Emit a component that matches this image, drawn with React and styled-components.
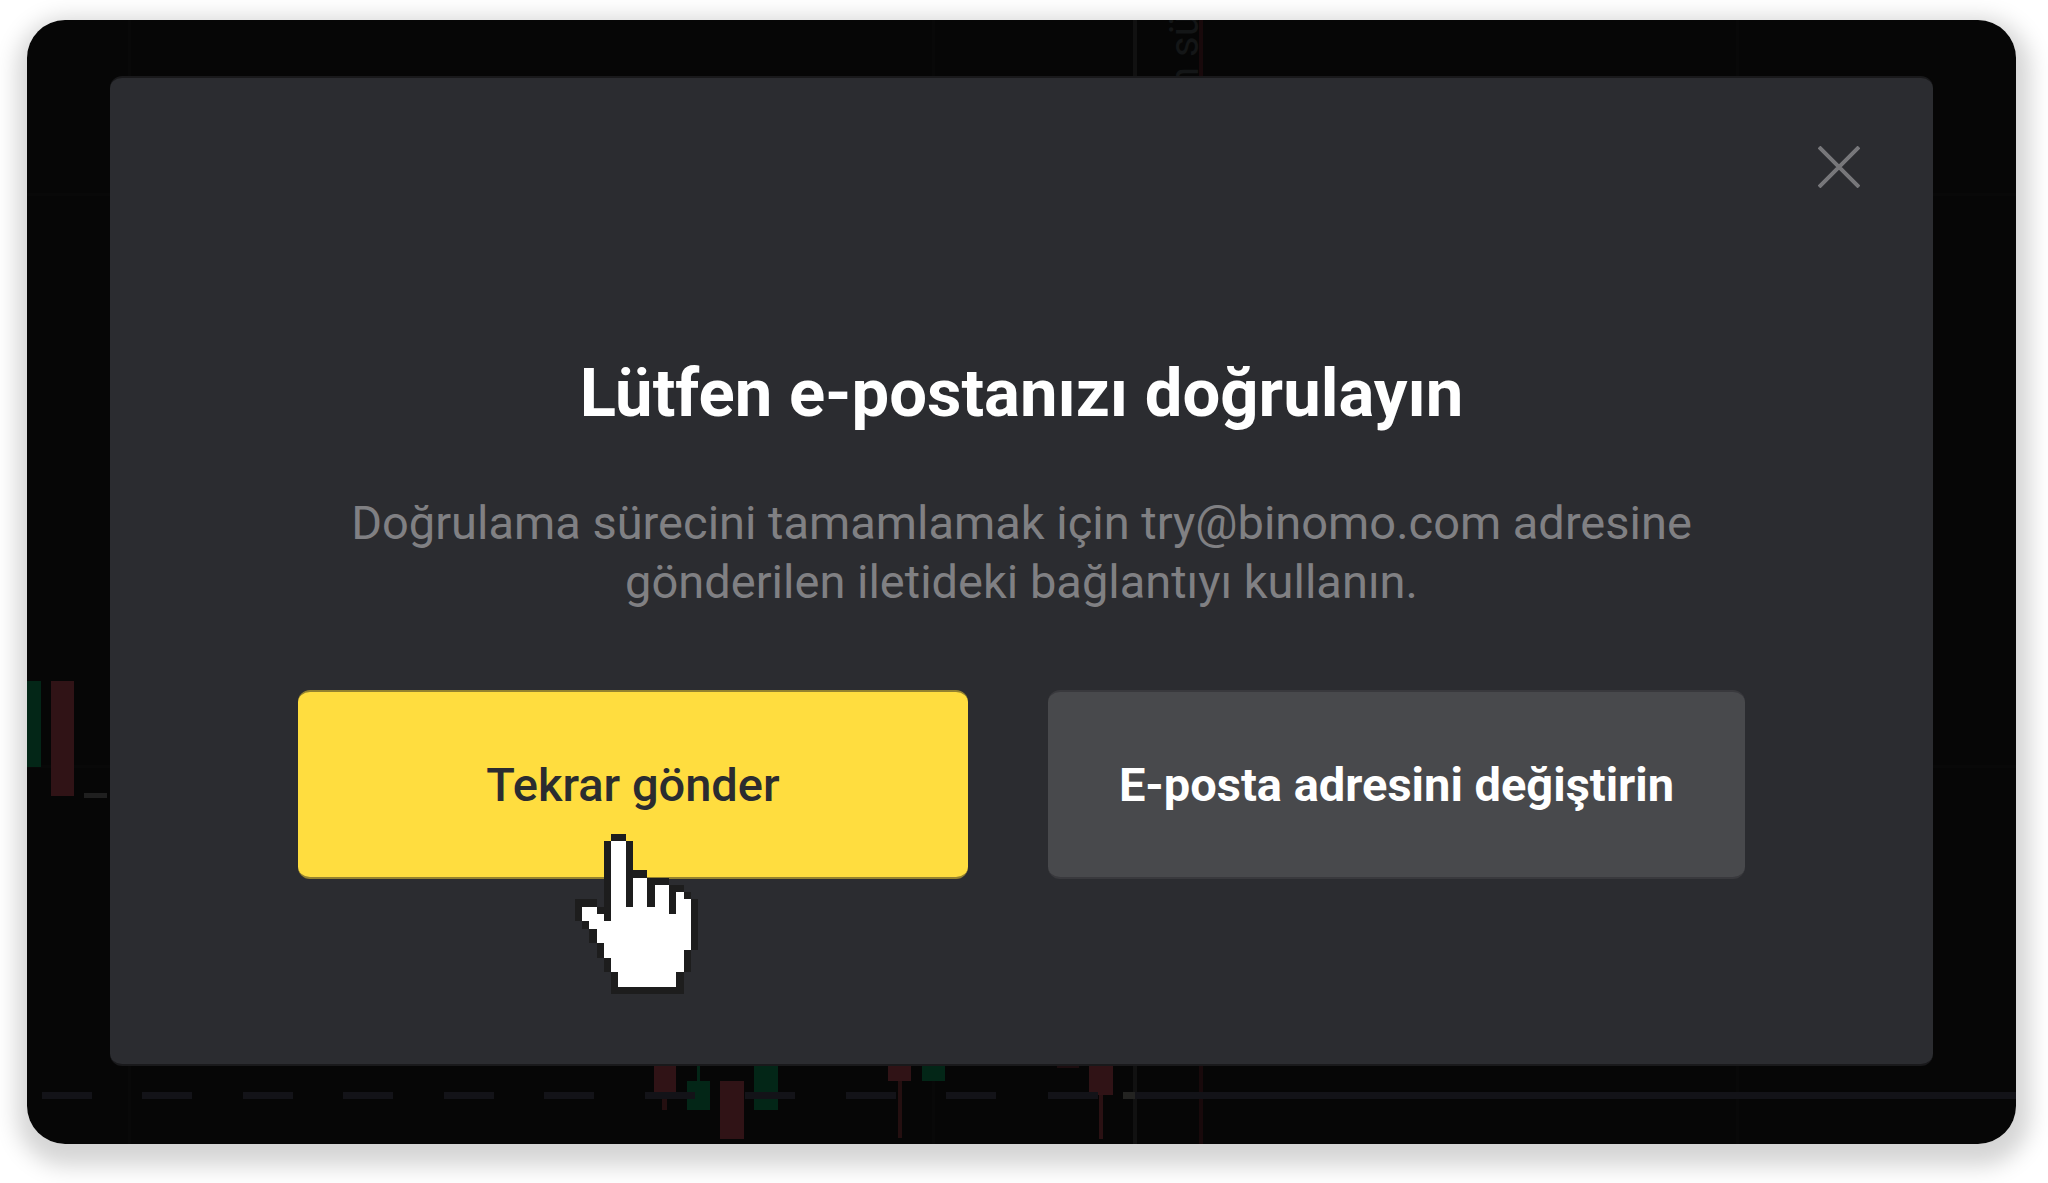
import React from 'react';
import styled, { createGlobalStyle } from 'styled-components';

const GlobalStyle = createGlobalStyle`
  *, *::before, *::after {
    box-sizing: border-box;
  }

  body {
    margin: 0;
    background: #fff;
    font-family: Roboto, 'Liberation Sans', sans-serif;
  }
`;

const Page = styled.div`
  padding: 20px 32px 39px 27px;
`;

const Screen = styled.main`
  position: relative;
  overflow: hidden;
  padding: 56px 83px 78px;
  border-radius: 38px;
  background: #060606;
`;

const ScreenShadow = styled.div`
  border-radius: 38px;
  box-shadow: 2px 10px 22px 12px rgba(0, 0, 0, 0.17);
`;

const ChartSvg = styled.svg`
  position: absolute;
  inset: 0;
  width: 100%;
  height: 100%;
`;

const Modal = styled.section`
  position: relative;
  border-top: 2px solid #19191b;
  border-bottom: 2px solid #19191b;
  border-radius: 12px;
  background: #2b2c30;
`;

const ModalHeader = styled.header`
  display: flex;
  justify-content: flex-end;
  padding: 65px 70px 0;
`;

const CloseButton = styled.button`
  display: grid;
  place-items: center;
  width: 48px;
  height: 48px;
  padding: 0;
  border: 0;
  background: none;
  color: #77777a;
  cursor: pointer;
`;

const ModalBody = styled.div`
  padding: 162px 188px 185px;
  text-align: center;
`;

const Title = styled.h1`
  margin: 0 0 60px;
  font-size: 67px;
  font-weight: 700;
  line-height: 80px;
  color: #fff;
`;

const Message = styled.p`
  margin: 0 0 79px;
  font-size: 47px;
  line-height: 59px;
  color: #808083;
`;

const Actions = styled.div`
  display: grid;
  grid-template-columns: 670fr 697fr;
  gap: 80px;
`;

const Action = styled.div`
  position: relative;
`;

const Button = styled.button`
  width: 100%;
  height: 189px;
  padding: 0 16px;
  border: 0 solid ${({ $primary }) => ($primary ? '#94822f' : '#39393d')};
  border-width: 2px 0;
  border-radius: 12px;
  background: ${({ $primary }) => ($primary ? '#ffdd3f' : '#48494c')};
  color: ${({ $primary }) => ($primary ? '#2b2c30' : '#fff')};
  font-family: inherit;
  font-size: 47px;
  font-weight: ${({ $primary }) => ($primary ? 500 : 700)};
  cursor: pointer;
`;

const HandSvg = styled.svg`
  position: absolute;
  top: 144px;
  left: calc(50% - 58px);
  width: 123px;
  height: 160px;
  pointer-events: none;
`;

// # is the outline, o is the fill
const handRows = [
  '     ##          ',
  '    #oo#         ',
  '    #oo#         ',
  '    #oo#         ',
  '    #oo#         ',
  '    #oo###       ',
  '    #oo#oo###    ',
  '    #oo#oo#oo##  ',
  '    #oo#oo#oo#o# ',
  '### #oo#oo#oo#oo#',
  '#oo##oooooooo#oo#',
  '#ooo#ooooooooooo#',
  ' #oooooooooooooo#',
  '  #ooooooooooooo#',
  '  #ooooooooooooo#',
  '   #oooooooooooo#',
  '   #ooooooooooo# ',
  '    #oooooooooo# ',
  '    #oooooooooo# ',
  '     #oooooooo#  ',
  '     #oooooooo#  ',
  '     ##########  ',
];

const HandCursor = () => (
  <HandSvg viewBox="0 0 17 22" preserveAspectRatio="none" shapeRendering="crispEdges" aria-hidden="true">
    {handRows.map((row, y) =>
      [...row].map((cell, x) =>
        cell === ' ' ? null : (
          <rect key={`${x}-${y}`} x={x} y={y} width="1" height="1" fill={cell === '#' ? '#1d1d1d' : '#fff'} />
        )
      )
    )}
  </HandSvg>
);

const RED = '#301316';
const GREEN = '#032617';

const candles = [
  { x: 0, y: 661, w: 14, h: 86, fill: GREEN },
  { x: 24, y: 661, w: 23, h: 115, fill: RED },
  { x: 627, y: 1040, w: 22, h: 32, fill: RED },
  { x: 635, y: 1072, w: 5, h: 18, fill: '#240f10' },
  { x: 670, y: 1040, w: 3, h: 21, fill: GREEN },
  { x: 660, y: 1061, w: 23, h: 29, fill: GREEN },
  { x: 693, y: 1061, w: 24, h: 58, fill: RED },
  { x: 727, y: 1040, w: 24, h: 50, fill: GREEN },
  { x: 861, y: 1040, w: 23, h: 21, fill: RED },
  { x: 871, y: 1061, w: 4, h: 57, fill: '#240f10' },
  { x: 895, y: 1040, w: 23, h: 21, fill: GREEN },
  { x: 1030, y: 1040, w: 22, h: 8, fill: '#1c0d0f' },
  { x: 1062, y: 1040, w: 24, h: 35, fill: RED },
  { x: 1072, y: 1075, w: 4, h: 44, fill: '#2a1113' },
];

const dashes = [15, 115, 216, 316, 417, 517, 618, 718, 819, 919, 1021];

const Chart = () => (
  <ChartSvg viewBox="0 0 1989 1124" preserveAspectRatio="none" aria-hidden="true">
    <g fill="#080808">
      <rect x="101" y="0" width="3" height="1124" />
      <rect x="905" y="0" width="3" height="1124" />
      <rect x="1709" y="0" width="3" height="1124" />
      <rect x="0" y="173" width="1989" height="3" />
      <rect x="0" y="745" width="1989" height="3" />
    </g>
    <rect x="1106" y="0" width="4" height="1124" fill="#111" />
    <rect x="1172" y="0" width="4" height="1124" fill="#18090b" />
    <text transform="translate(1171 69) rotate(-90)" fontSize="40" fill="#141617">
      n sü
    </text>
    {candles.map(({ x, y, w, h, fill }) => (
      <rect key={`${x}-${y}`} x={x} y={y} width={w} height={h} fill={fill} />
    ))}
    <rect x="57" y="773" width="23" height="5" fill="#1f1f1f" />
    {dashes.map((x) => (
      <rect key={x} x={x} y="1072" width="50" height="7" fill="#131318" />
    ))}
    <rect x="1096" y="1072" width="12" height="7" fill="#232321" />
    <rect x="1108" y="1072" width="881" height="7" fill="#131318" />
  </ChartSvg>
);

const App = () => (
  <>
    <GlobalStyle />
    <Page>
      <ScreenShadow>
        <Screen>
          <Chart />
          <Modal role="dialog" aria-labelledby="verify-title">
            <ModalHeader>
              <CloseButton type="button" aria-label="Kapat">
                <svg width="42" height="42" viewBox="0 0 42 42" fill="none" stroke="currentColor" strokeWidth="4">
                  <path d="M1 1l40 40M41 1L1 41" />
                </svg>
              </CloseButton>
            </ModalHeader>
            <ModalBody>
              <Title id="verify-title">Lütfen e-postanızı doğrulayın</Title>
              <Message>
                Doğrulama sürecini tamamlamak için try@binomo.com adresine gönderilen iletideki bağlantıyı kullanın.
              </Message>
              <Actions>
                <Action>
                  <Button type="button" $primary>Tekrar gönder</Button>
                  <HandCursor />
                </Action>
                <Action>
                  <Button type="button">E-posta adresini değiştirin</Button>
                </Action>
              </Actions>
            </ModalBody>
          </Modal>
        </Screen>
      </ScreenShadow>
    </Page>
  </>
);

export default App;
